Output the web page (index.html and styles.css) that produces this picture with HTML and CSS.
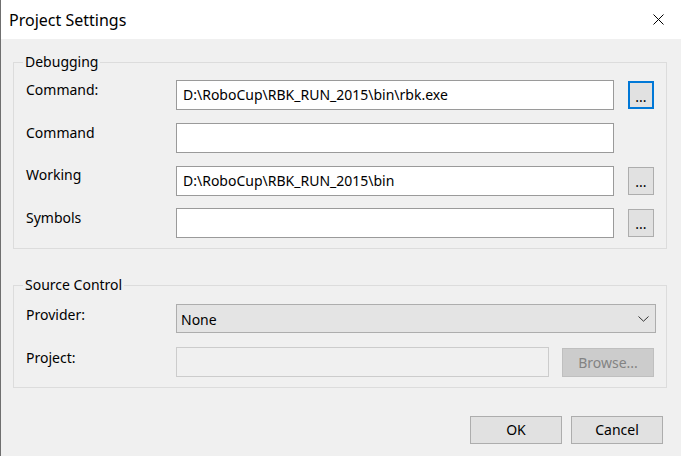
FILE: index.html
```html
<!DOCTYPE html>
<html lang="en">
<head>
<meta charset="utf-8">
<title>Project Settings</title>
<link rel="stylesheet" href="styles.css">
</head>
<body>
<div class="window">
  <header class="titlebar">
    <span class="title">Project Settings</span>
    <span class="close" aria-label="Close">
      <svg width="11" height="11" viewBox="0 0 11 11"><path d="M0.5 0.5L10.5 10.5M10.5 0.5L0.5 10.5" stroke="#000" stroke-width="1" fill="none"/></svg>
    </span>
  </header>
  <main class="content">
    <fieldset class="group debug">
      <legend>Debugging</legend>
      <div class="row">
        <label class="lbl">Command:</label>
        <div class="field">D:\RoboCup\RBK_RUN_2015\bin\rbk.exe</div>
        <button class="dots focused">...</button>
      </div>
      <div class="row">
        <label class="lbl">Command</label>
        <div class="field"></div>
      </div>
      <div class="row">
        <label class="lbl">Working</label>
        <div class="field">D:\RoboCup\RBK_RUN_2015\bin</div>
        <button class="dots">...</button>
      </div>
      <div class="row">
        <label class="lbl">Symbols</label>
        <div class="field"></div>
        <button class="dots">...</button>
      </div>
    </fieldset>
    <fieldset class="group source">
      <legend>Source Control</legend>
      <div class="row combo-row">
        <label class="lbl">Provider:</label>
        <div class="combo">
          <span>None</span>
          <svg width="11" height="6" viewBox="0 0 11 6"><path d="M0.5 0.5L5.5 5.2L10.5 0.5" stroke="#333" stroke-width="1" fill="none"/></svg>
        </div>
      </div>
      <div class="row">
        <label class="lbl">Project:</label>
        <div class="field disabled"></div>
        <button class="btn browse" disabled>Browse...</button>
      </div>
    </fieldset>
    <div class="actions">
      <button class="btn">OK</button>
      <button class="btn">Cancel</button>
    </div>
  </main>
</div>
</body>
</html>
```
FILE: styles.css
```css
* { box-sizing: border-box; }
html, body { margin: 0; padding: 0; }
body {
  font-family: "Noto Sans", "DejaVu Sans", sans-serif;
  font-size: 14px;
  color: #000;
  background: #f0f0f0;
}
.window {
  width: 681px;
  height: 456px;
  background: #f0f0f0;
  border-left: 1px solid #6f6f6f;
  overflow: hidden;
}
.titlebar {
  height: 39px;
  background: #fff;
  display: flex;
  align-items: center;
  justify-content: space-between;
  padding: 0 17px 0 8px;
}
.title {
  font-size: 16px;
  line-height: 20px;
}
.close { display: flex; }
.content {
  padding: 14px 14px 0 12px;
}
.group {
  margin: 0;
  border: 1px solid #dcdcdc;
  min-width: 0;
}
.group legend {
  padding: 0 2px;
  margin-left: -3px;
  line-height: 18px;
}
.debug { padding: 9px 12px 10px 12px; }
.source { margin-top: 27px; padding: 10px 12px 10px 12px; }
.row {
  display: flex;
  align-items: flex-start;
  height: 30px;
}
.row + .row { margin-top: 13px; }
.debug .row:last-child { margin-top: 12px; }
.source .row + .row { margin-top: 14px; }
.combo-row { height: 29px; }
.lbl {
  width: 150px;
  flex-shrink: 0;
  line-height: 18px;
  padding-top: 1px;
}
.debug .row:nth-child(4) .lbl { padding-top: 0; }
.source .lbl { padding-top: 2px; }
.field {
  width: 438px;
  height: 30px;
  flex-shrink: 0;
  background: #fff;
  border: 1px solid #9a9a9a;
  padding-left: 6px;
  line-height: 28px;
  white-space: nowrap;
}
.field.disabled {
  width: 373px;
  background: #f0f0f0;
  border-color: #cccccc;
}
button {
  font-family: inherit;
  font-size: 14px;
  color: #000;
  margin: 0;
  padding: 0;
}
.dots {
  width: 26px;
  height: 28px;
  margin: 1px 0 0 14px;
  background: #e1e1e1;
  border: 1px solid #adadad;
  line-height: 24px;
  padding-top: 2px;
  flex-shrink: 0;
}
.dots.focused {
  border: 2px solid #0078d7;
}
.combo {
  width: 480px;
  height: 29px;
  flex-shrink: 0;
  background: #e4e4e4;
  border: 1px solid #adadad;
  display: flex;
  align-items: center;
  justify-content: space-between;
  padding: 1px 6px 0 4px;
}
.combo svg { margin-top: -1px; }
.btn {
  width: 92px;
  height: 28px;
  background: #e1e1e1;
  border: 1px solid #adadad;
  flex-shrink: 0;
  line-height: 24px;
}
.btn.browse {
  height: 29px;
  margin: 1px 0 0 13px;
  background: #cccccc;
  border-color: #bfbfbf;
  color: #838383;
}
.actions {
  display: flex;
  justify-content: flex-end;
  gap: 9px;
  margin: 28px 4px 0 0;
}
```
